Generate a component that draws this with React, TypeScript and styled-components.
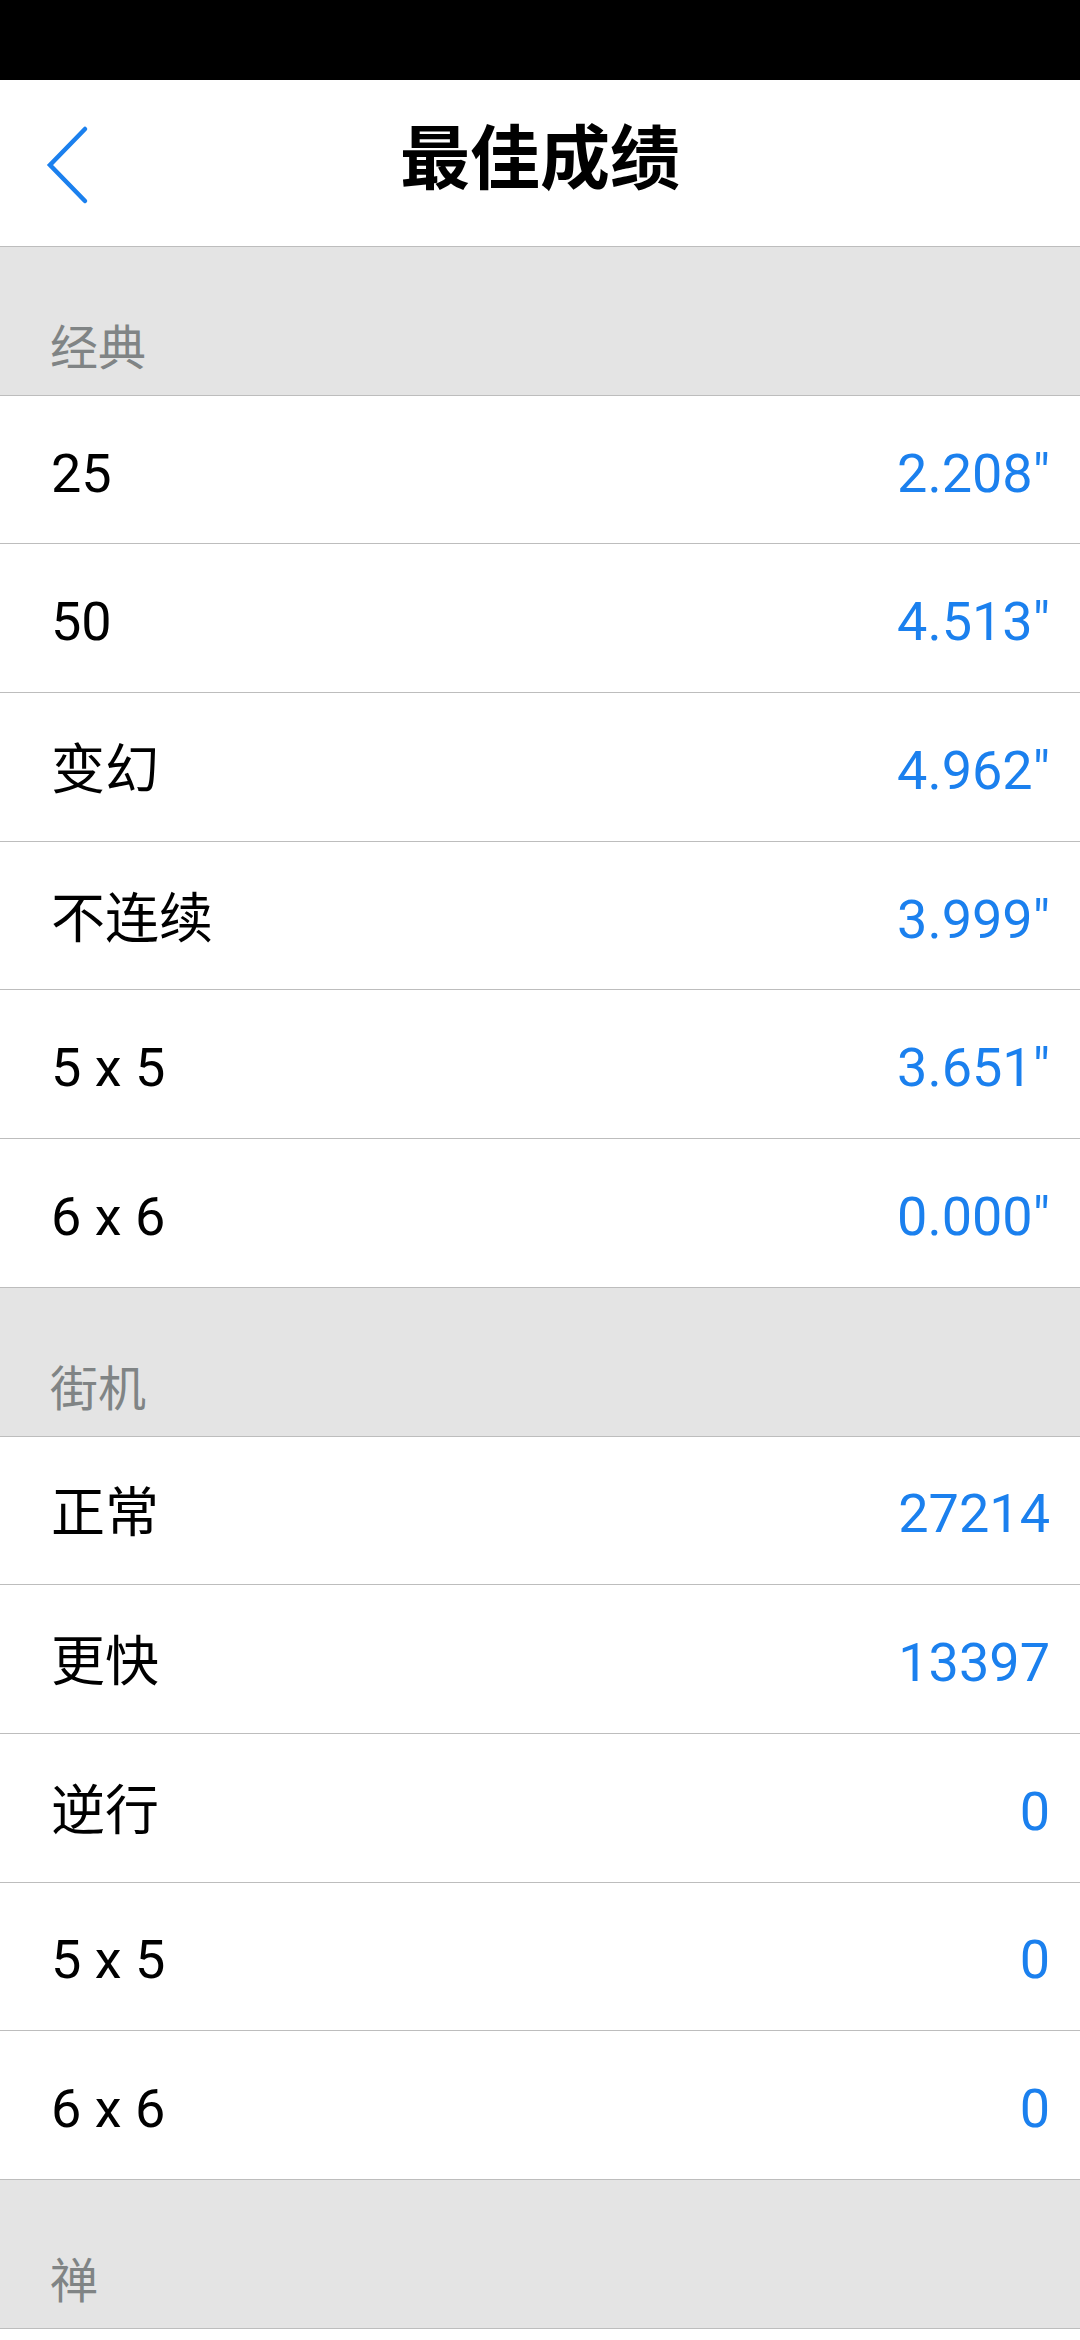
import React from "react";
import styled, { createGlobalStyle } from "styled-components";

const Global = createGlobalStyle`
  html, body { margin: 0; padding: 0; background: #ffffff; }
  body { font-family: Roboto, "Noto Sans CJK SC", sans-serif; }
  * { box-sizing: border-box; }
`;

const Page = styled.div`
  width: 1080px;
  min-height: 2340px;
  background: #ffffff;
  display: flex;
  flex-direction: column;
  overflow: hidden;
`;

const StatusBar = styled.div`
  height: 80px;
  background: #000000;
  flex-shrink: 0;
`;

const Header = styled.header`
  position: relative;
  height: 167px;
  flex-shrink: 0;
  display: flex;
  align-items: center;
  justify-content: center;
  border-bottom: 1.5px solid #bdbdbd;
`;

const BackButton = styled.button`
  position: absolute;
  left: 40px;
  top: 45px;
  width: 60px;
  height: 80px;
  padding: 0;
  border: 0;
  background: transparent;
  display: flex;
  align-items: center;
  justify-content: center;
`;

const Title = styled.h1`
  margin: 0 0 18px;
  font-family: "Noto Sans CJK SC", sans-serif;
  font-weight: 700;
  font-size: 70px;
  line-height: 1;
  color: #000000;
`;

const SectionHeader = styled.div`
  height: 148.7px;
  flex-shrink: 0;
  background: #e4e4e4;
  border-bottom: 1.5px solid #bdbdbd;
  display: flex;
  align-items: flex-end;
  padding: 0 0 27px 50px;
  font-family: "Noto Sans CJK SC", sans-serif;
  font-size: 48px;
  line-height: 1;
  color: #808485;
`;

const Row = styled.div`
  height: 148.7px;
  flex-shrink: 0;
  display: flex;
  align-items: center;
  justify-content: space-between;
  padding: 8px 30px 0 51px;
  border-bottom: 1.5px solid #bdbdbd;
  background: #ffffff;
  font-size: 54px;
  line-height: 1;
`;

const Label = styled.span`
  color: #000000;
  font-family: Roboto, "Noto Sans CJK SC", sans-serif;
`;

const Value = styled.span`
  color: #1b80ee;
  font-family: Roboto, "Noto Sans CJK SC", sans-serif;
`;

const Filler = styled.div`
  flex: 1;
  background: #ffffff;
`;

type Item = { label: string; value: string };
type Section = { title: string; items: Item[] };

const sections: Section[] = [
  {
    title: "经典",
    items: [
      { label: "25", value: "2.208\"" },
      { label: "50", value: "4.513\"" },
      { label: "变幻", value: "4.962\"" },
      { label: "不连续", value: "3.999\"" },
      { label: "5 x 5", value: "3.651\"" },
      { label: "6 x 6", value: "0.000\"" },
    ],
  },
  {
    title: "街机",
    items: [
      { label: "正常", value: "27214" },
      { label: "更快", value: "13397" },
      { label: "逆行", value: "0" },
      { label: "5 x 5", value: "0" },
      { label: "6 x 6", value: "0" },
    ],
  },
  { title: "禅", items: [] },
];

const ChevronLeft = () => (
  <svg width="60" height="80" viewBox="0 0 60 80" fill="none">
    <polyline
      points="45,4 10,40 45,76"
      stroke="#1b80ee"
      strokeWidth="4.5"
      strokeLinecap="round"
      strokeLinejoin="miter"
      fill="none"
    />
  </svg>
);

export default function App() {
  return (
    <Page>
      <Global />
      <StatusBar />
      <Header>
        <BackButton aria-label="返回">
          <ChevronLeft />
        </BackButton>
        <Title>最佳成绩</Title>
      </Header>
      {sections.map((s) => (
        <React.Fragment key={s.title}>
          <SectionHeader>{s.title}</SectionHeader>
          {s.items.map((it, i) => (
            <Row key={s.title + i}>
              <Label>{it.label}</Label>
              <Value>{it.value}</Value>
            </Row>
          ))}
        </React.Fragment>
      ))}
      <Filler />
    </Page>
  );
}
